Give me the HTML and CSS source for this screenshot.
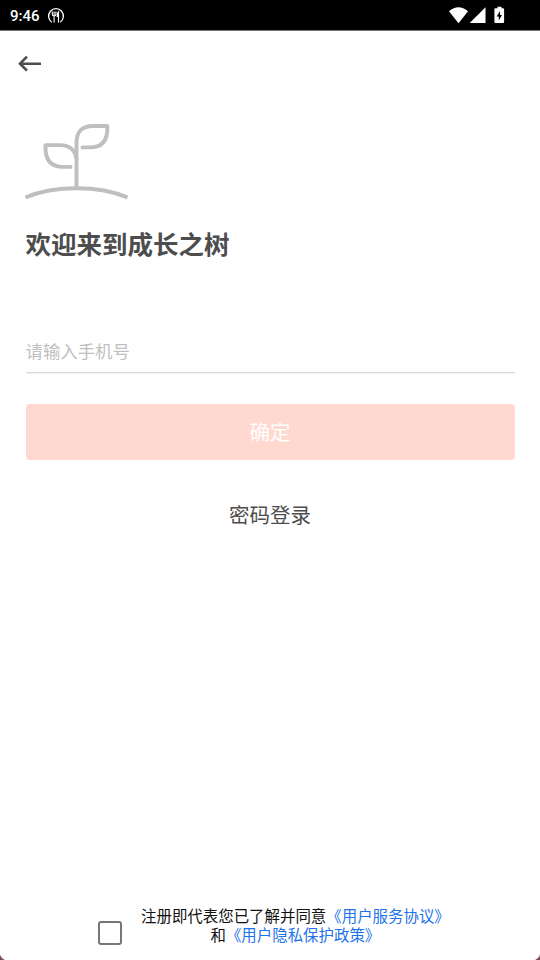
FILE: index.html
```
<!DOCTYPE html>
<html lang="zh-CN">
<head>
<meta charset="utf-8">
<title>成长之树</title>
<link rel="stylesheet" href="styles.css">
</head>
<body>
<div class="screen">
  <header class="status">
    <span class="clock">9:46</span>
    <svg class="app-icon" width="18" height="18" viewBox="0 0 18 18" fill="none" stroke="#fff">
      <path d="M4.800 15.200A7.400 7.400 0 1 1 13.200 15.200" stroke-width="1.300"/>
      <path d="M5.300 4.500v3.200q0 1.200 1.800 1.200t1.800-1.200V4.500M7.100 4.500V15.500" stroke-width="1.100"/>
      <path d="M11.500 15.500V4.800q-1.300 1-1.300 4.700h1.300" stroke-width="1.200" fill="#fff"/>
    </svg>
    <svg class="system-icons" width="60" height="20" viewBox="0 0 60 20" fill="#fff">
      <path d="M0 5.300Q9.500-2.700 19 5.300L9.500 17.200z"/>
      <path d="M36.500 1.200V17H20.700z"/>
      <path fill-rule="evenodd" d="M48.500.800h4v1.500h1.500q1.100 0 1.100 1.100v12.500q0 1.100-1.100 1.100h-7.500q-1.100 0-1.100-1.100V3.400q0-1.100 1.100-1.100h2zM51 5l-3.400 5.600h2.200v4L53 9h-2z"/>
    </svg>
  </header>
  <nav class="toolbar">
    <svg width="26" height="18" viewBox="0 0 26 18" fill="none" stroke="#4d4d4d" stroke-width="2.600">
      <path d="M24 8.700H3M10 1.700L3 8.700l7 7"/>
    </svg>
  </nav>
  <main class="content">
    <svg class="sprout" width="104" height="80" viewBox="0 0 104 80" fill="none" stroke="#bfbfbf" stroke-width="3.900">
      <path d="M-.500 76.500Q21 67.300 50.500 67.300T101.500 76.500"/>
      <path d="M50.500 67V22Q50.500 5 67 5H81.300V8.500Q81 26.400 64 26.400H56.500" stroke-linecap="round" stroke-linejoin="round"/>
      <path d="M50.500 38Q48.500 24.100 34 24.100H19.500V27Q19.500 45.700 37 45.900H44.500" stroke-linecap="round" stroke-linejoin="round"/>
    </svg>
    <h1 class="title">欢迎来到成长之树</h1>
    <div class="phone">请输入手机号</div>
    <div class="confirm">确定</div>
    <div class="password-login">密码登录</div>
  </main>
  <footer class="agreement">
    <span class="checkbox"></span>
    <p class="terms">注册即代表您已了解并同意<span class="link">《用户服务协议》</span><br>和<span class="link">《用户隐私保护政策》</span></p>
  </footer>
  <svg class="corner" width="5" height="7" viewBox="0 0 5 7"><path d="M0 1.500Q1 5 5 7H0z" fill="#7c4560"/></svg>
  <svg class="corner corner-right" width="5" height="7" viewBox="0 0 5 7"><path d="M0 1.500Q1 5 5 7H0z" fill="#7c4560"/></svg>
</div>
</body>
</html>
```
FILE: styles.css
```
* { box-sizing: border-box; }
body {
  margin: 0;
  background: #fff;
  font-family: Roboto, "Noto Sans CJK SC", sans-serif;
}
.screen {
  position: relative;
  display: flex;
  flex-direction: column;
  height: 960px;
  overflow: hidden;
}
.status {
  display: flex;
  align-items: center;
  height: 31px;
  padding: 0 31px 0 10px;
  background: #000;
  border-bottom: 1px solid #777;
  color: #fff;
}
.clock { width: 37px; font-size: 15px; line-height: 18px; font-weight: 500; margin-top: 1px; }
.app-icon { margin-top: 1px; }
.system-icons { margin-left: auto; margin-top: 2px; }
.toolbar { height: 80px; padding: 24px 17px; }
.toolbar svg { display: block; }
.content { display: flex; flex-direction: column; padding: 10px 25.500px 0; }
.sprout { display: block; flex: none; overflow: visible; }
.title {
  margin: 25px 0 0;
  font-size: 25.500px;
  line-height: 38px;
  font-weight: 700;
  color: #4d4d4d;
}
.phone {
  height: 44px;
  margin-top: 65px;
  padding-top: 10px;
  border-bottom: 1px solid #d9d9d9;
  box-shadow: 0 1px #f3f3f3;
  font-size: 17.400px;
  line-height: 26px;
  color: #bfbfbf;
}
.confirm {
  height: 56px;
  margin-top: 31px;
  border-radius: 4px;
  background: #ffd8cf;
  color: #fff;
  font-size: 20.500px;
  line-height: 59px;
  text-align: center;
}
.password-login {
  margin-top: 41px;
  font-size: 20.500px;
  line-height: 30px;
  text-align: center;
  color: #4d4d4d;
}
.agreement {
  display: flex;
  align-items: flex-start;
  margin-top: auto;
  padding: 0 0 15px 98px;
}
.checkbox {
  width: 24px;
  height: 24px;
  margin-top: 13px;
  border: 2.500px solid #777;
  border-radius: 3px;
}
.terms {
  margin: 0 0 0 19px;
  font-size: 15.450px;
  line-height: 18.500px;
  white-space: nowrap;
  text-align: center;
  color: #111;
}
.link { color: #1e73e8; }
.corner { position: absolute; left: 0; bottom: 0; }
.corner-right { left: auto; right: 0; transform: scaleX(-1); }
```
